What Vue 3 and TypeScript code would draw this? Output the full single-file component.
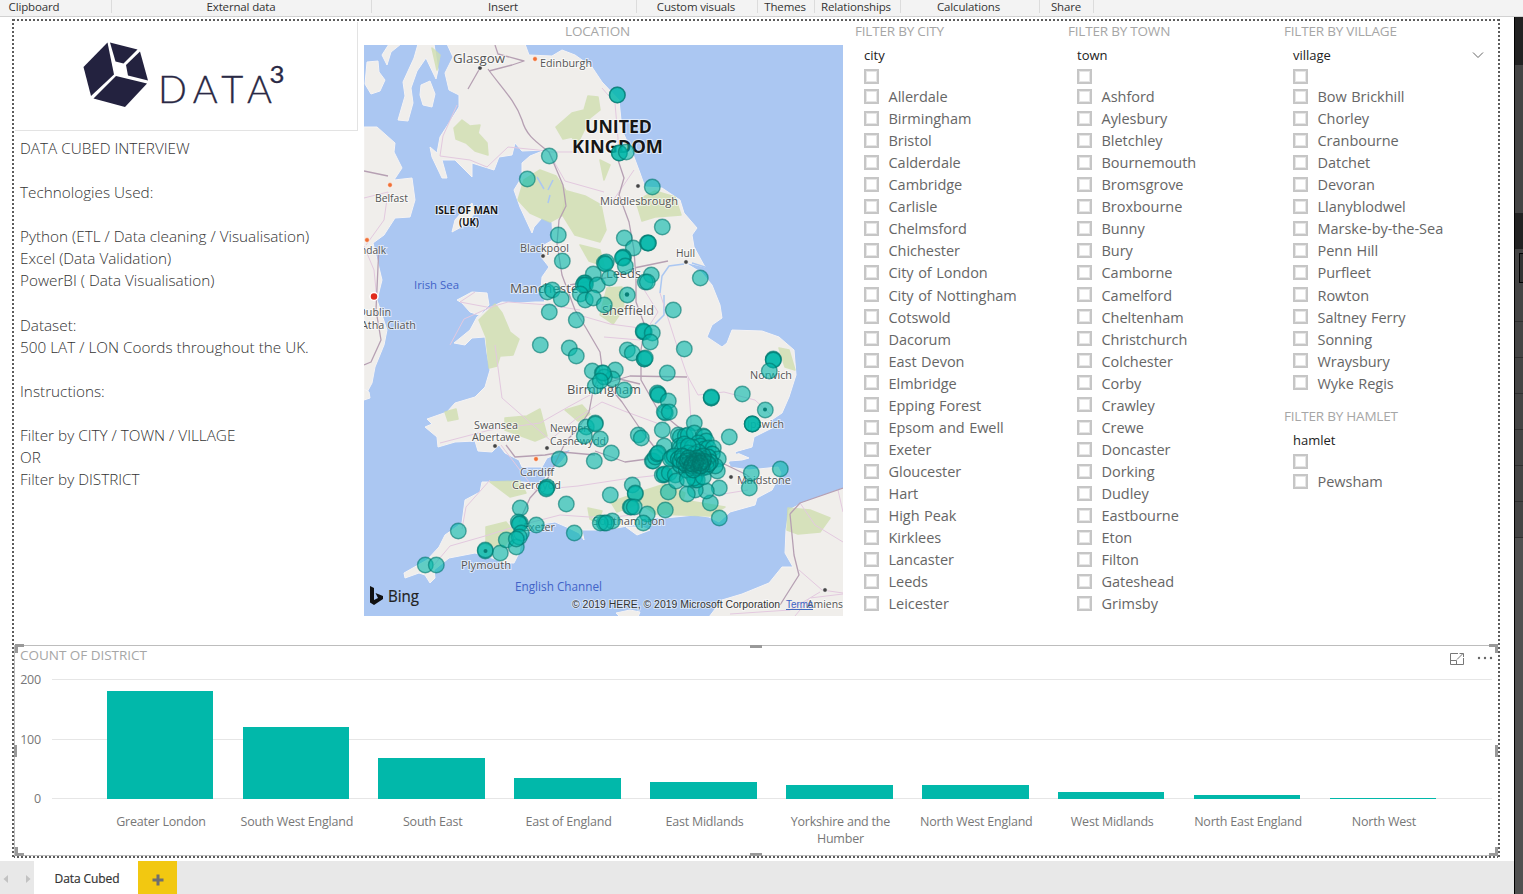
<script setup lang="ts">
interface Slicer { title: string; field: string; items: string[]; chevron?: boolean }
interface MapLabel { t: string; x: number; y: number; w: number; s: number; c?: string }

const ribbon = [
  { label: 'Clipboard', width: 112, center: 34 },
  { label: 'External data', width: 260, center: 129 },
  { label: 'Insert', width: 265, center: 131 },
  { label: 'Custom visuals', width: 121, center: 59 },
  { label: 'Themes', width: 57, center: 27 },
  { label: 'Relationships', width: 86, center: 41 },
  { label: 'Calculations', width: 139, center: 67.5 },
  { label: 'Share', width: 54, center: 26 },
]

const notes = [
  'DATA CUBED INTERVIEW', '', 'Technologies Used:', '',
  'Python (ETL / Data cleaning / Visualisation)', 'Excel (Data Validation)', 'PowerBI ( Data Visualisation)', '',
  'Dataset:', '500 LAT / LON Coords throughout the UK.', '', 'Instructions:', '',
  'Filter by CITY / TOWN / VILLAGE', 'OR', 'Filter by DISTRICT',
]

const columns: Slicer[][] = [
  [{
    title: 'FILTER BY CITY', field: 'city',
    items: ['Allerdale', 'Birmingham', 'Bristol', 'Calderdale', 'Cambridge', 'Carlisle', 'Chelmsford', 'Chichester', 'City of London', 'City of Nottingham', 'Cotswold', 'Dacorum', 'East Devon', 'Elmbridge', 'Epping Forest', 'Epsom and Ewell', 'Exeter', 'Gloucester', 'Hart', 'High Peak', 'Kirklees', 'Lancaster', 'Leeds', 'Leicester'],
  }],
  [{
    title: 'FILTER BY TOWN', field: 'town',
    items: ['Ashford', 'Aylesbury', 'Bletchley', 'Bournemouth', 'Bromsgrove', 'Broxbourne', 'Bunny', 'Bury', 'Camborne', 'Camelford', 'Cheltenham', 'Christchurch', 'Colchester', 'Corby', 'Crawley', 'Crewe', 'Doncaster', 'Dorking', 'Dudley', 'Eastbourne', 'Eton', 'Filton', 'Gateshead', 'Grimsby'],
  }],
  [
    {
      title: 'FILTER BY VILLAGE', field: 'village', chevron: true,
      items: ['Bow Brickhill', 'Chorley', 'Cranbourne', 'Datchet', 'Devoran', 'Llanyblodwel', 'Marske-by-the-Sea', 'Penn Hill', 'Purfleet', 'Rowton', 'Saltney Ferry', 'Sonning', 'Wraysbury', 'Wyke Regis'],
    },
    { title: 'FILTER BY HAMLET', field: 'hamlet', items: ['Pewsham'] },
  ],
]

const pxPerUnit = 0.597
const districts = [
  { name: 'Greater London', value: 181 }, { name: 'South West England', value: 121 },
  { name: 'South East', value: 69 }, { name: 'East of England', value: 35 },
  { name: 'East Midlands', value: 28 }, { name: 'Yorkshire and the Humber', value: 24 },
  { name: 'North West England', value: 23 }, { name: 'West Midlands', value: 12 },
  { name: 'North East England', value: 6 }, { name: 'North West', value: 2 },
]

const labels: MapLabel[] = [
  { t: 'Glasgow', x: 453, y: 63, w: 52, s: 12.5 },
  { t: 'Edinburgh', x: 540, y: 67, w: 52, s: 10.5 },
  { t: 'Belfast', x: 375, y: 202, w: 33, s: 10.5 },
  { t: 'ISLE OF MAN', x: 435, y: 214, w: 63, s: 10.5, c: 'bold' },
  { t: '(UK)', x: 459, y: 226, w: 20, s: 10.5, c: 'bold' },
  { t: 'UNITED', x: 585, y: 133, w: 67, s: 17.5, c: 'bold' },
  { t: 'KINGDOM', x: 572, y: 152.5, w: 91, s: 17.5, c: 'bold' },
  { t: 'Middlesbrough', x: 600, y: 205, w: 78, s: 10.5 },
  { t: 'Blackpool', x: 520, y: 252, w: 49, s: 10.5 },
  { t: 'Hull', x: 676, y: 257, w: 19, s: 10.5 },
  { t: 'Leeds', x: 606, y: 278, w: 35, s: 12 },
  { t: 'Manchester', x: 510, y: 293, w: 74, s: 12.5 },
  { t: 'Sheffield', x: 602, y: 315, w: 52, s: 12.5 },
  { t: 'ndalk', x: 360, y: 254, w: 26, s: 10.5 },
  { t: 'Dublin', x: 358, y: 316, w: 33, s: 10.5 },
  { t: 'Atha Cliath', x: 361, y: 329, w: 55, s: 10.5 },
  { t: 'Irish Sea', x: 414, y: 289, w: 45, s: 11.5, c: 'sea' },
  { t: 'Birmingham', x: 567, y: 394, w: 74, s: 12.5 },
  { t: 'Norwich', x: 750, y: 379, w: 42, s: 10.5 },
  { t: 'Ipswich', x: 747, y: 428, w: 37, s: 10.5 },
  { t: 'Swansea', x: 474, y: 429, w: 44, s: 10.5 },
  { t: 'Abertawe', x: 472, y: 441, w: 48, s: 10.5 },
  { t: 'Newport', x: 550, y: 432, w: 41, s: 10.5 },
  { t: 'Casnewydd', x: 550, y: 445, w: 56, s: 10.5 },
  { t: 'Cardiff', x: 520, y: 476, w: 34, s: 10.5 },
  { t: 'Caerdydd', x: 512, y: 489, w: 49, s: 10.5 },
  { t: 'Exeter', x: 523, y: 531, w: 32, s: 10.5 },
  { t: 'Southampton', x: 593, y: 525, w: 72, s: 10.5 },
  { t: 'Maidstone', x: 737, y: 484, w: 54, s: 10.5 },
  { t: 'Plymouth', x: 461, y: 569, w: 50, s: 10.5 },
  { t: 'English Channel', x: 515, y: 591, w: 87, s: 12, c: 'sea' },
]

const land = [
  // Great Britain
  'M447 44L453 57L445 73L449 90L459 95L459 107L449 123L440 137L437 153L430 147L432 157L442 178L447 178L442 160L455 160L472 177L472 163L494 170L499 157L512 155L515 143L522 151L545 150L530 156L522 163L522 177L514 190L520 207L532 233L534 227L542 218L552 222L553 240L544 245L542 258L549 267L542 277L541 290L545 302L535 302L520 303L502 302L489 308L477 317L470 330L454 343L465 345L472 338L485 337L487 353L490 370L485 387L475 397L455 403L447 412L427 419L432 424L425 427L437 437L438 447L455 442L475 441L478 451L492 452L499 445L505 453L519 460L522 467L542 467L547 458L562 452L571 449L562 461L549 473L541 484L522 482L482 482L480 492L465 500L462 523L445 535L439 547L427 560L404 573L405 578L419 573L425 575L430 583L435 578L434 570L449 558L475 553L492 558L505 563L514 563L519 553L522 537L535 525L555 522L569 528L579 533L584 540L582 530L604 530L622 527L637 524L645 517L665 518L695 515L709 517L719 522L730 512L755 505L757 498L772 490L781 473L778 467L749 470L730 467L729 461L742 460L749 458L735 452L752 447L754 437L772 428L770 421L782 413L789 397L796 375L794 350L779 337L762 331L732 330L727 343L722 347L707 337L712 325L722 318L720 305L712 285L702 273L684 262L705 267L694 247L692 235L697 228L684 213L680 200L662 188L645 187L640 173L634 157L622 130L619 100L602 82L592 67L575 55L562 50L552 56L529 55L525 44Z',
  // Ireland
  'M364 127L377 127L395 143L394 152L402 168L394 180L412 178L415 200L410 217L395 218L384 235L373 243L382 280L377 300L387 330L384 345L375 367L372 383L364 398Z',
  // Northern France
  'M844 488L802 503L789 510L786 530L785 553L793 567L782 567L769 583L742 594L722 600L709 617H844Z',
  // Kintyre and islands
  'M418 44L414 58L403 82L405 96L398 120L408 121L413 103L411 88L417 71L426 58L436 79L438 70L434 44ZM389 44L382 55L387 65L391 52L401 44ZM367 62L378 61L379 72L385 80L380 91L371 94L365 84Z',
  'M421 85L430 81L435 94L432 107L423 105L420 95Z',
  'M452 232L455 220L462 212L472 203L475 213L465 225Z',
  'M457 300L472 292L487 293L489 305L479 315L470 312L462 303Z',
  'M626 527L642 527L650 530L637 535Z',
  'M364 389L369 392L370 398L364 400ZM616 613L630 610L640 612L638 617H620Z',
]
const parks = [
  'M454 128L462 120L470 126L480 125L478 133L487 143L488 155L475 151L466 143L456 139Z',
  'M556 127L572 113L584 110L588 96L598 97L600 110L590 118L577 145L572 137L563 139Z',
  'M524 180L540 170L556 176L566 191L563 215L550 222L530 213L518 200Z',
  'M567 191L585 196L601 205L606 230L600 242L575 235L562 214Z',
  'M636 201L655 191L675 197L681 215L655 217L642 221Z',
  'M479 320L495 304L502 313L510 332L519 339L513 355L500 356L497 366L489 368L486 337Z',
  'M505 418L527 416L540 409L547 436L535 441L505 430Z',
  'M607 288L622 287L624 308L613 324L600 315Z',
  'M779 348L789 350L795 370L785 367Z',
  'M490 482L520 481L526 493L510 497Z',
  'M486 527L506 522L514 532L504 547L486 545Z',
  'M611 502L640 492L665 484L685 493L683 500L725 507L710 516L655 514L640 503L617 512Z',
  'M588 508L602 511L597 524L590 519Z',
  'M788 508L810 510L830 518L820 532L798 534L787 530Z',
  'M445 412L456 409L458 419L448 421ZM600 160L610 165L604 180ZM432 48L440 55L437 70Z',
  'M580 245L600 250L604 266L589 261ZM565 410L582 405L590 414L578 421Z',
]
const motorways = [
  'M488 69C500 86 515 100 522 120C526 135 535 141 549 152L563 185L566 206L559 220L557 244L562 275L575 310L586 328L600 352L603 375L640 384',
  'M480 68L468 89M495 45L498 54L524 61L512 65L489 71M600 372L593 391L589 412L578 429L566 441L548 478L530 498L519 522M618 160L624 178L619 195L629 222L634 250L636 280L636 302L645 326L641 350L641 380L658 410L682 430L690 452',
  'M600 385L630 376L687 377M602 378L622 402L641 430L655 448M595 451L625 462L655 458L682 457L720 462L745 474L760 485M570 285L610 277L634 268L668 261M506 445L515 457L545 455L562 452L595 455M364 171L388 176M379 245L376 310L381 340L371 362L364 365',
  'M790 514L800 503L843 488M790 514L794 555L799 575L780 605',
]
const roads = [
  'M457 105L443 136L440 156L470 160L487 167L508 147L548 151L565 181L604 192M450 345L464 319L491 307L508 302L549 305L580 310M660 293L675 340L687 375L698 395L724 392L755 400L770 414M638 280L658 312L640 340L604 337M501 445L535 490L578 486L624 479L660 475L711 496L748 490M440 443L490 430L540 423L568 407L590 395M434 565L450 546L485 536L517 526L560 515L604 518L642 514M602 88L615 103L619 150M688 378L691 420L690 455',
  'M364 198L388 192L384 220L366 245M364 246L374 270L377 300M800 503L815 525L843 542M799 570L822 590L843 593M795 616L810 598L843 594M730 614L790 610L820 592M838 490L843 512',
  'M490 480L466 507L462 529M548 152L602 152M475 292L460 302L492 308M572 313L610 324L655 330M662 425L624 411L602 402L577 418L550 440L502 398L495 345M634 170L610 205',
]
const inlets = [
  'M537 177L544 189M548 190L553 180M550 195L548 203M660 293L662 276L669 266L684 264M729 463L744 462M736 453L748 450M705 267L692 263M664 295L664 315L655 324',
]

const towns = [[480, 68], [638, 186], [543, 256], [686, 262], [495, 446], [547, 448], [731, 477], [825, 590]]
const capitals = [[535, 59], [390, 185], [536, 459], [367, 240]]

// Locations as [x, y]; repeated entries stack and darken.
const points: number[][] = [
  [549,156],[527,179],[558,235],[617,95],[617,95],[619,153],[619,153],[626,152],[652,187],[662,227],[624,238],[648,243],[647,243],[648,243],
  [562,261],[547,292],[552,290],[561,299],[549,312],[576,320],[540,345],[569,348],[576,356],[592,371],[595,386],[602,373],[593,274],
  [585,283],[584,283],[583,285],[585,285],[597,285],[580,294],[585,300],[593,298],[604,263],[604,305],[586,427],[595,423],[595,424],
  [633,248],[623,258],[623,257],[622,258],[625,266],[606,262],[605,264],[609,278],[651,275],[645,282],[647,282],[627,295],[700,278],[673,310],
  [643,332],[644,332],[643,331],[652,333],[650,342],[627,350],[632,353],[644,359],[644,359],[645,358],[684,349],[667,373],[615,370],[612,379],[604,377],[603,373],[600,381],[624,390],
  [658,394],[657,393],[658,395],[668,401],[665,413],[664,412],[669,412],[711,398],[711,398],[711,397],[742,394],[773,359],[773,360],[773,360],[769,371],[765,410],[752,424],[752,424],[752,424],[694,423],[662,430],
  [584,436],[600,439],[559,459],[594,461],[611,453],[546,488],[547,487],[546,489],[566,504],[520,508],[520,523],[518,522],[519,524],[536,525],[574,533],[458,531],[425,565],[436,565],[485,551],[485,550],[500,553],[506,540],[516,547],[521,533],[519,537],[516,539],
  [638,435],[641,438],[664,446],[729,437],[751,473],[780,469],[749,488],[719,518],[710,503],[719,488],[706,491],[695,490],[687,494],[668,492],[665,510],[632,485],[635,494],[635,493],[630,507],[631,507],[634,507],[610,495],[647,514],[643,523],[612,521],[604,523],[600,523],[606,523],
  [652,461],[653,461],[655,457],[657,454],[658,453],[664,475],[662,475],[664,474],[669,473],[675,475],[680,465],
  [678,435],[680,437],[685,436],[688,435],[694,433],[703,436],[704,437],[706,441],[679,446],[680,448],[682,450],[684,444],[698,443],[700,446],[704,449],[708,448],[713,448],[712,454],[718,459],[717,471],[715,466],
  [672,457],[672,458],[670,459],[674,456],[678,459],[680,461],[684,457],[686,461],[688,464],[690,458],[692,462],[694,459],[696,463],[698,460],[700,457],[702,462],[704,459],[706,462],[708,457],[710,462],[690,468],[694,468],[698,468],[702,468],[706,467],[686,470],[691,473],[696,474],[695,480],[697,480],[694,478],[676,481],[687,479],[703,477],[688,453],[694,454],[698,452],[692,447],[688,446],
  [690,463],[694,465],[698,465],[702,464],[686,465],[700,461],[694,461],[690,460],[703,456],[708,464],[682,456],[684,463],
  [687,461],[691,466],[695,463],[699,466],[703,461],[697,458],[701,466],[693,470],[688,458],[696,461],[692,464],[700,463],
]
// Outlines that show through where the London locations pile up.
const rings = points.filter(([x, y]) => x > 676 && x < 714 && y > 450 && y < 472)
</script>

<template>
  <div class="app">
    <header class="ribbon">
      <div v-for="g in ribbon" :key="g.label" class="group" :style="{ width: g.width + 'px' }">
        <span :style="{ width: g.center * 2 + 'px' }">{{ g.label }}</span>
      </div>
    </header>

    <main class="workspace">
      <section class="canvas">
        <i class="edge top" /><i class="edge bottom" /><i class="edge left" /><i class="edge right" />
        <div class="upper">
          <aside class="intro">
            <div class="logo">
              <svg viewBox="15 22 343 107" width="343" height="107">
                <g fill="#23223f">
                  <path d="M107.500 42.500L83.500 67L91 96L114 74.500Z" />
                  <path d="M110 42.500L137.500 49.500L123.500 63.500L115.500 61.500Z" />
                  <path d="M140 51.500L148 80.500L128 75.500L126 65Z" />
                  <path d="M116 76L147 83.500L125 107L93.500 98.500Z" />
                </g>
                <g class="word">
                  <text x="158" y="102.500" font-size="38" textLength="114" lengthAdjust="spacing">DATA</text>
                  <text x="269.500" y="83" font-size="23" textLength="15" lengthAdjust="spacingAndGlyphs" class="cube">3</text>
                </g>
              </svg>
            </div>
            <div class="notes"><p v-for="(n, i) in notes" :key="i">{{ n }}</p></div>
          </aside>

          <section class="location">
            <h2>LOCATION</h2>
            <svg class="map" viewBox="364 45 479 571" width="479" height="571">
              <rect x="364" y="45" width="479" height="571" fill="#abc7f2" />
              <path v-for="(d, i) in land" :key="'l' + i" :d="d" class="land" />
              <path v-for="(d, i) in parks" :key="'p' + i" :d="d" class="park" />
              <path v-for="(d, i) in inlets" :key="'w' + i" :d="d" class="inlet" />
              <path v-for="(d, i) in roads" :key="'r' + i" :d="d" class="road" />
              <path v-for="(d, i) in motorways" :key="'m' + i" :d="d" class="motorway" />
              <circle v-for="(c, i) in towns" :key="'t' + i" :cx="c[0]" :cy="c[1]" r="2.300" class="town" />
              <circle v-for="(c, i) in capitals" :key="'c' + i" :cx="c[0]" :cy="c[1]" r="2.400" class="capital" />
              <circle cx="374" cy="296.500" r="4" class="dublin" />
              <text v-for="l in labels" :key="l.t" :x="l.x" :y="l.y" :font-size="l.s" :textLength="l.w" lengthAdjust="spacingAndGlyphs" class="place" :class="l.c">{{ l.t }}</text>
              <circle v-for="(p, i) in points" :key="'b' + i" :cx="p[0] + 0.3" :cy="p[1]" r="7.800" class="bubble" />
              <circle v-for="(p, i) in rings" :key="'o' + i" :cx="p[0] + 0.3" :cy="p[1]" r="7.800" class="ring" />
              <circle cx="627" cy="294.500" r="2.200" class="pin" />
              <circle cx="765" cy="409.500" r="2" class="pin" />
              <circle cx="485.500" cy="551" r="2" class="pin" />
              <path d="M370 586L374 588V600L378 598L375.500 593L383 596V599L374 605L370 602.500Z" fill="#111" />
              <text x="388" y="602" font-size="16" textLength="31" lengthAdjust="spacingAndGlyphs" class="bing">Bing</text>
              <text x="572" y="608" font-size="10" textLength="208" lengthAdjust="spacingAndGlyphs" class="credit">© 2019 HERE, © 2019 Microsoft Corporation</text>
              <text x="807" y="608" font-size="10.500" textLength="36" lengthAdjust="spacingAndGlyphs" class="place">Amiens</text>
              <text x="786" y="608" font-size="10" textLength="27" lengthAdjust="spacingAndGlyphs" class="terms">Terms</text>
              <path d="M786 609.500H813" stroke="#4169c0" />
            </svg>
          </section>

          <div v-for="(col, ci) in columns" :key="ci" class="slicers">
            <section v-for="s in col" :key="s.field" class="slicer">
              <h2>{{ s.title }}</h2>
              <div class="field">
                <span>{{ s.field }}</span>
                <svg v-if="s.chevron" width="12" height="8" viewBox="0 0 12 8"><path d="M1 1.500L6 6.500L11 1.500" fill="none" stroke="#666" /></svg>
              </div>
              <ul>
                <li class="blank"><i class="box" /></li>
                <li v-for="it in s.items" :key="it"><i class="box" /><span>{{ it }}</span></li>
              </ul>
            </section>
          </div>
        </div>

        <section class="chart">
          <i class="h tl" /><i class="h tr" /><i class="h bl" /><i class="h br" />
          <i class="h tm" /><i class="h bm" /><i class="h lm" /><i class="h rm" />
          <div class="head">
            <h2>COUNT OF DISTRICT</h2>
            <svg width="46" height="14" viewBox="0 0 46 14" fill="none" stroke="#777">
              <path d="M9 1.500H1.500V12.500H14.500V6M1.500 8.500H7.500V12.500M8 7.500L14 1.500M10.500 1.500H14.500V5" />
              <g fill="#666" stroke="none"><circle cx="30" cy="6" r="1.200" /><circle cx="36" cy="6" r="1.200" /><circle cx="42" cy="6" r="1.200" /></g>
            </svg>
          </div>
          <div class="plot">
            <div class="axis"><span>200</span><span>100</span><span>0</span></div>
            <div class="bars">
              <div v-for="d in districts" :key="d.name" class="slot">
                <div class="bar" :style="{ height: d.value * pxPerUnit + 'px' }" />
              </div>
            </div>
          </div>
          <div class="names"><span v-for="d in districts" :key="d.name"><b>{{ d.name }}</b></span></div>
        </section>
      </section>
      <aside class="pane">
        <i class="dark p1" /><i class="mid p2" /><i class="dark p3" />
        <i class="mid p4"><u /></i>
        <i v-for="n in 6" :key="n" class="mid row" />
      </aside>
    </main>

    <footer class="tabs">
      <div class="nav">
        <svg width="34" height="33" viewBox="0 0 34 33" fill="#c2c2c2"><path d="M8 14V22L3.500 18ZM26 14V22L30.500 18Z" /></svg>
      </div>
      <div class="tab">Data Cubed</div>
      <div class="add"><svg width="12" height="12" viewBox="0 0 12 12"><path d="M6 .5V11.500M.5 6H11.500" stroke="#6f6f6f" stroke-width="3" /></svg></div>
    </footer>
  </div>
</template>

<style>
html, body { margin: 0; overflow: hidden; }
</style>

<style scoped>
* { box-sizing: border-box; }
.app { width: 1523px; height: 894px; display: flex; flex-direction: column; background: #fff; overflow: hidden; font-family: "Open Sans", "Noto Sans", sans-serif; color: #666; }
h2, p, ul { margin: 0; padding: 0; font-weight: 400; }
i { display: block; }
h2 { font-size: 13.500px; line-height: 19px; color: #a6a6a6; letter-spacing: -.2px; white-space: nowrap; }

.ribbon { height: 17px; flex: none; display: flex; background: #f3f3f3; border-bottom: 1px solid #d2d2d2; }
.group { height: 13px; border-right: 1px solid #dcdcdc; font-size: 11.500px; line-height: 14px; color: #333; letter-spacing: -.15px; }
.group span { display: block; text-align: center; white-space: nowrap; }

.workspace { height: 844px; flex: none; display: flex; justify-content: space-between; }
.canvas { position: relative; width: 1487px; height: 839px; margin: 2px 0 0 13px; }
.edge { position: absolute; z-index: 3; }
.edge.top, .edge.bottom { left: 0; right: 0; height: 2px; background: repeating-linear-gradient(90deg, #5c5c5c 0 2px, #fff 2px 4px); }
.edge.left, .edge.right { top: 0; bottom: 0; width: 2px; background: repeating-linear-gradient(180deg, #5c5c5c 0 2px, #fff 2px 4px); }
.edge.top { top: 0; } .edge.bottom { bottom: 0; } .edge.left { left: -1px; } .edge.right { right: 0; }

.upper { display: grid; grid-template-columns: 351px 491px 213px 216px 216px; height: 626px; padding-top: 3px; }
.intro { padding-left: 2px; }
.logo { width: 343px; height: 109px; border: 1px solid #e3e3e3; border-top: 0; border-left: 0; }
.logo svg { display: block; }
.word text { font-family: "Lato", sans-serif; font-weight: 300; fill: #2a2945; stroke: #2a2945; stroke-width: .3; }
.word .cube { font-weight: 400; }
.notes { padding: 6px 0 0 5px; }
.notes p { height: 22.070px; line-height: 22px; font-size: 15.300px; font-weight: 300; color: #333; letter-spacing: 0; white-space: nowrap; }

.location h2 { height: 23px; text-align: center; padding-right: 24px; }
.map { display: block; }
.land { fill: #f0eeeb; stroke: #f5f3f4; stroke-linejoin: round; }
.park { fill: #d0dfb0; opacity: .8; stroke: #d0dfb0; stroke-width: 1.5; stroke-linejoin: round; }
.inlet { fill: none; stroke: #abc7f2; stroke-width: 1.5; }
.road { fill: none; stroke: #e3c9df; stroke-width: 1; stroke-linejoin: round; }
.motorway { fill: none; stroke: #b6a0b3; stroke-width: 1.3; stroke-linejoin: round; }
.town { fill: #444; stroke: #fff; stroke-width: .7; }
.capital { fill: #f07035; stroke: #fff; stroke-width: .6; }
.dublin { fill: #e02b1c; stroke: #fff; stroke-width: 1.5; }
.place { fill: #555; paint-order: stroke; stroke: #fff; stroke-opacity: .6; stroke-width: 2px; }
.place.bold { font-weight: 700; fill: #161616; }
.place.sea { fill: #4263c8; stroke: none; }
.bubble { fill: #01b8aa; fill-opacity: .6; stroke: #01776e; stroke-opacity: .6; stroke-width: 1.4; }
.ring { fill: none; stroke: #01776e; stroke-opacity: .3; stroke-width: 1.2; }
.pin { fill: #087e76; }
.bing { fill: #222; stroke: #222; stroke-width: .2; }
.credit { fill: #333; font-family: "Liberation Sans", Arial, sans-serif; paint-order: stroke; stroke: #fff; stroke-opacity: .5; stroke-width: 2px; }
.terms { fill: #3d62c4; font-family: "Liberation Sans", Arial, sans-serif; }

.slicer { height: 385px; }
.field { display: flex; justify-content: space-between; align-items: center; width: 191px; height: 20px; margin: 4px 0 0 9px; font-size: 13px; color: #222; }
.field span { line-height: 18px; }
.field svg { display: block; }
ul { list-style: none; padding: 2px 0 0 9px; }
li { display: flex; align-items: center; height: 22.050px; font-size: 14.500px; letter-spacing: -.03px; word-spacing: .8px; color: #666; white-space: nowrap; }
li.blank { height: 18.300px; }
li span { margin-left: 9.500px; line-height: 20px; padding-top: 1.600px; }
.box { width: 15px; height: 15px; flex: none; border: 2px solid #c6c6c6; box-shadow: inset 0 0 0 1px #e6e6e6; background: #fff; }

.chart { position: relative; height: 211px; margin-left: 1px; border: 1px solid #bdbdbd; width: 1485px; }
.h { position: absolute; z-index: 2; width: 9px; height: 9px; border: 0 solid #999; }
.tl { top: -2px; left: 0; border-top-width: 3px; border-left-width: 3px; }
.tr { top: -2px; right: 0; border-top-width: 3px; border-right-width: 3px; }
.bl { bottom: -1px; left: 0; border-bottom-width: 3px; border-left-width: 3px; }
.br { bottom: -1px; right: 0; border-bottom-width: 3px; border-right-width: 3px; }
.tm, .bm { left: 735px; width: 12px; height: 3px; background: #999; }
.tm { top: -1px; } .bm { bottom: -1px; }
.lm, .rm { top: 99px; width: 3px; height: 12px; background: #999; }
.lm { left: -1px; } .rm { right: 0; }
.head { display: flex; justify-content: space-between; height: 33px; padding: 0 3px 0 5px; }
.head h2 { letter-spacing: -.03px; line-height: 18px; }
.head svg { display: block; margin-top: 6px; }
.plot { display: flex; height: 120px; }
.axis { width: 26px; height: 120px; margin-right: 11px; display: flex; flex-direction: column; justify-content: space-between; text-align: right; font-size: 12.500px; color: #777; letter-spacing: -.2px; }
.axis span { line-height: 2px; height: 1px; }
.bars { width: 1440px; height: 120px; padding-left: 40px; display: flex; background: linear-gradient(#e6e6e6, #e6e6e6) 0 0 / 100% 1px no-repeat, linear-gradient(#e6e6e6, #e6e6e6) 0 50% / 100% 1px no-repeat, linear-gradient(#e6e6e6, #e6e6e6) 0 100% / 100% 1px no-repeat; }
.slot { width: 135.900px; height: 120px; flex: none; display: flex; align-items: flex-end; justify-content: center; }
.bar { width: 106.500px; background: #01b8aa; }
.names { display: flex; padding: 14px 0 0 78px; }
.names span { width: 135.900px; display: flex; justify-content: center; font-size: 12.500px; line-height: 17px; letter-spacing: -.22px; color: #777; text-align: center; }
.names b { font-weight: 400; max-width: 118px; }

.pane { width: 9px; border-left: 1px solid #000; background: #505050; }
.dark { background: #222; } .mid { background: #444; }
.p1 { height: 48px; } .p2 { height: 148px; } .p3 { height: 36px; }
.p4 { height: 73px; padding: 4px 0 0 4px; border-bottom: 1px solid #303030; }
.p4 u { display: block; height: 30px; background: #333; border: 1px solid #000; border-right: 0; }
.row { height: 36px; border-bottom: 1px solid #303030; }

.tabs { height: 33px; width: 1514px; flex: none; display: flex; background: #e8e8e8; box-shadow: 1px 0 #000, 9px 0 #505050; }
.nav { width: 34px; }
.tab { width: 104px; background: #fff; text-align: center; font-size: 12px; line-height: 35px; color: #333; padding-left: 2px; letter-spacing: -.1px; -webkit-text-stroke: .2px #333; }
.add { width: 39px; background: #f2c811; display: flex; align-items: center; justify-content: center; padding-top: 5px; }
</style>
